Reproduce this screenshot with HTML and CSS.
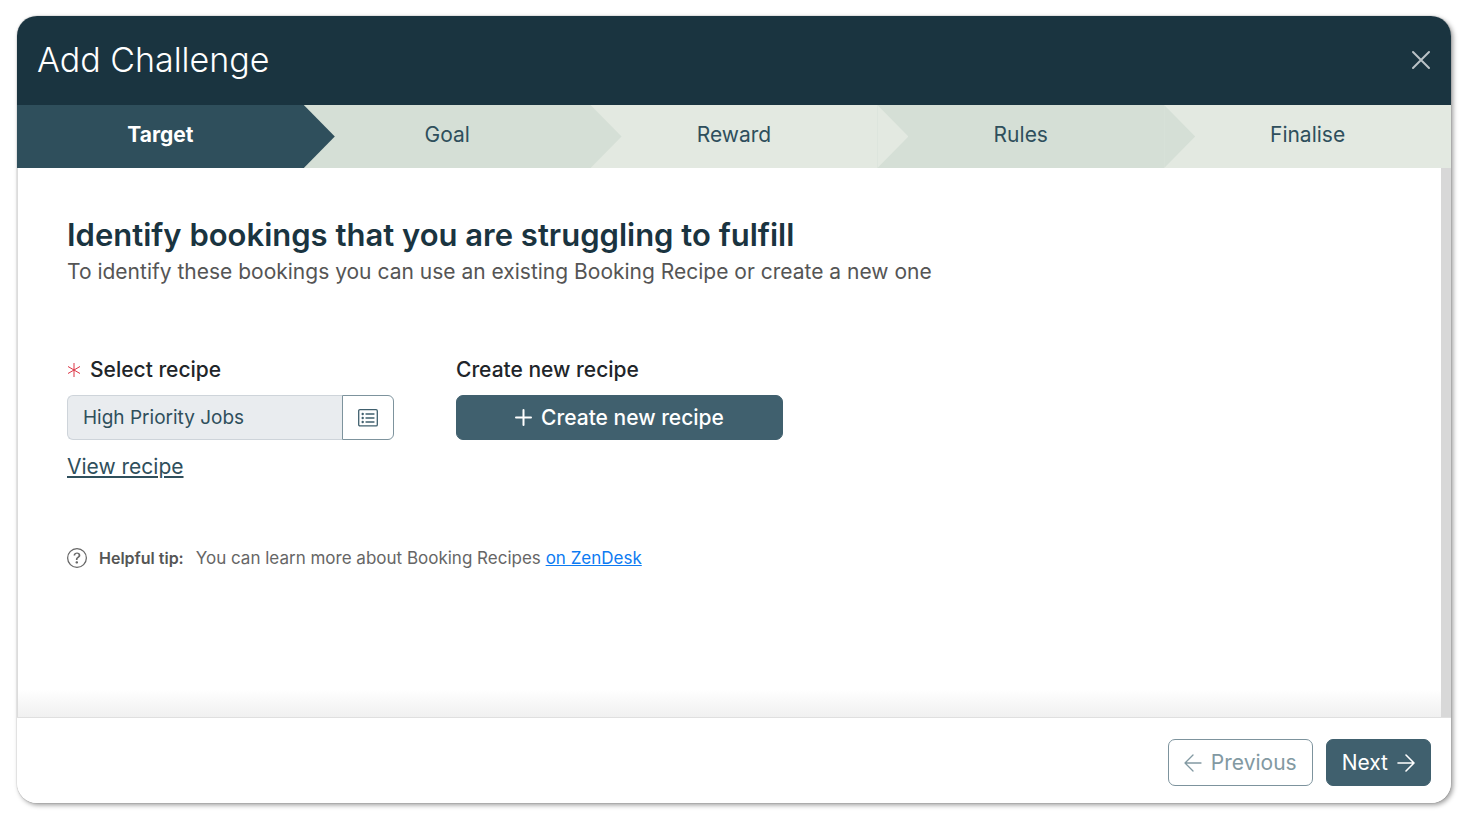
FILE: index.html
```html
<!DOCTYPE html>
<html lang="en">
<head>
<meta charset="utf-8">
<title>Add Challenge</title>
<meta name="viewport" content="width=device-width, initial-scale=1">
<link rel="stylesheet" href="styles.css">
</head>
<body>
<main class="modal" role="dialog" aria-labelledby="modal-title">
  <header class="modal-header">
    <h1 class="modal-title" id="modal-title">Add Challenge</h1>
    <button class="close" type="button" aria-label="Close">
      <svg width="20" height="20" viewBox="0 0 20 20" fill="none" stroke="currentColor" stroke-width="2" stroke-linecap="round"><path d="M2 2l16 16M18 2L2 18"/></svg>
    </button>
  </header>
  <ol class="steps">
    <li class="step step-active" aria-current="step">Target</li>
    <li class="step">Goal</li>
    <li class="step">Reward</li>
    <li class="step">Rules</li>
    <li class="step">Finalise</li>
  </ol>
  <section class="modal-body">
    <h2 class="heading">Identify bookings that you are struggling to fulfill</h2>
    <p class="lead">To identify these bookings you can use an existing Booking Recipe or create a new one</p>
    <div class="fields">
      <div class="field">
        <label class="label" for="recipe">
          <svg class="required" width="14" height="14" viewBox="0 0 14 14" fill="none" stroke="currentColor" stroke-width="1" aria-hidden="true"><path d="M7 0v14M1 3.5l12 7M13 3.5l-12 7"/></svg>
          Select recipe
        </label>
        <div class="input-group">
          <input class="input" id="recipe" type="text" value="High Priority Jobs" readonly>
          <button class="pick" type="button" aria-label="Choose recipe">
            <svg width="20" height="20" viewBox="0 0 20 20" fill="none" stroke="currentColor" stroke-width="1.3" stroke-linecap="round"><rect x=".7" y="1.7" width="18.6" height="16.2" rx="1.2"/><path d="M8 6h8M8 10h8M8 14h8"/><g fill="currentColor" stroke="none"><circle cx="4.7" cy="6" r="1.2"/><circle cx="4.7" cy="10" r="1.2"/><circle cx="4.7" cy="14" r="1.2"/></g></svg>
          </button>
        </div>
        <a class="view" href="#recipe">View recipe</a>
      </div>
      <div class="field">
        <span class="label" id="create-label">Create new recipe</span>
        <button class="btn btn-primary btn-create" type="button">
          <svg width="17" height="17" viewBox="0 0 17 17" fill="none" stroke="currentColor" stroke-width="2" stroke-linecap="round"><path d="M8.500 1v15M1 8.500h15"/></svg>
          Create new recipe
        </button>
      </div>
    </div>
    <p class="tip">
      <svg width="20" height="20" viewBox="0 0 16 16" fill="currentColor" aria-hidden="true"><path d="M8 15A7 7 0 1 1 8 1a7 7 0 0 1 0 14m0 1A8 8 0 1 0 8 0a8 8 0 0 0 0 16"/><path d="M5.255 5.786a.237.237 0 0 0 .241.247h.825c.138 0 .248-.113.266-.25.09-.656.54-1.134 1.342-1.134.686 0 1.314.343 1.314 1.168 0 .635-.374.927-.965 1.371-.673.489-1.206 1.060-1.168 1.987l.003.217a.25.25 0 0 0 .25.246h.811a.25.25 0 0 0 .25-.25v-.105c0-.718.273-.927 1.010-1.486.609-.463 1.244-.977 1.244-2.056 0-1.511-1.276-2.241-2.673-2.241-1.267 0-2.655.590-2.750 2.286m1.557 5.763c0 .533.425.927 1.010.927.609 0 1.028-.394 1.028-.927 0-.552-.420-.940-1.029-.940-.584 0-1.009.388-1.009.940"/></svg>
      <strong class="tip-title">Helpful tip:</strong>
      <span class="tip-text">You can learn more about Booking Recipes <a class="tip-link" href="#zendesk">on ZenDesk</a></span>
    </p>
  </section>
  <footer class="modal-footer">
    <button class="btn btn-outline" type="button">
      <svg width="18" height="18" viewBox="0 0 18 18" fill="none" stroke="currentColor" stroke-width="1.300" stroke-linecap="round" stroke-linejoin="round"><path d="M17 9H1M9 1L1 9l8 8"/></svg>
      Previous
    </button>
    <button class="btn btn-primary" type="button">
      Next
      <svg width="18" height="18" viewBox="0 0 18 18" fill="none" stroke="currentColor" stroke-width="1.600" stroke-linecap="round" stroke-linejoin="round"><path d="M1 9h16M9 1l8 8-8 8"/></svg>
    </button>
  </footer>
</main>
</body>
</html>
```
FILE: styles.css
```css
* { box-sizing: border-box; }

body {
  margin: 0;
  min-height: 100vh;
  padding: 16px 18px 22px 17px;
  display: flex;
  background: #fff;
  color: #212529;
  font-family: Inter, "Liberation Sans", sans-serif;
  font-size: 21px;
  line-height: 28px;
}

button, input { font: inherit; }
h1, h2, p, ol { margin: 0; padding: 0; }
svg { flex: none; }

.modal {
  flex: 1;
  min-width: 0;
  display: flex;
  flex-direction: column;
  overflow: hidden;
  border-radius: 20px;
  background: #fff;
  box-shadow: 0 0 1px rgba(0, 0, 0, .5), 2px 2px 5px rgba(0, 0, 0, .4);
}

.modal-header {
  display: flex;
  align-items: center;
  justify-content: space-between;
  padding: 22px 20px 23px;
  background: #1a3440;
  color: #fff;
}

.modal-title {
  font-size: 34px;
  line-height: 44px;
  font-weight: 300;
}

.close {
  display: flex;
  padding: 0;
  border: 0;
  background: none;
  color: #bac2c6;
}

.steps {
  display: flex;
  list-style: none;
  background: #e3e9e1;
}

.step {
  position: relative;
  flex: 1;
  padding: 16px 0 19px;
  text-align: center;
  background: #e3e9e1;
  color: #2f4f5c;
}

.step:nth-child(even) { background: #d5dfd6; }

.step::after {
  content: "";
  position: absolute;
  z-index: 1;
  top: 0;
  bottom: 0;
  left: 100%;
  width: 31px;
  background: inherit;
  clip-path: polygon(0 0, 100% 50%, 0 100%);
}

.step:last-child::after { display: none; }

.step.step-active {
  background: #2f4f5c;
  color: #fff;
  font-weight: 700;
}

.modal-body {
  flex: 1;
  padding: 46px 50px 50px 49px;
  border-left: 1px solid #dcdcdc;
  border-right: 10px solid #d8d8d8;
  background: linear-gradient(to top, #f0f0f0, #fff 28px);
}

.heading {
  color: #1a3440;
  font-size: 31px;
  line-height: 42px;
  font-weight: 600;
}

.lead {
  color: #555;
  line-height: 32px;
}

.fields {
  display: flex;
  gap: 62px;
  margin-top: 68px;
}

.field {
  display: flex;
  flex-direction: column;
  width: 327px;
}

.label {
  display: flex;
  align-items: center;
  gap: 9px;
  margin-bottom: 11px;
  font-weight: 500;
}

.required { color: #dc3545; }

.input-group { display: flex; height: 45px; }

.input {
  flex: 1;
  min-width: 0;
  padding: 0 15px;
  border: 1px solid #ced4da;
  border-right: 0;
  border-radius: 6px 0 0 6px;
  background: #e9ecef;
  color: #2f4f5c;
  font-size: 19px;
}

.pick {
  display: flex;
  align-items: center;
  justify-content: center;
  width: 52px;
  padding: 0;
  border: 1px solid #7d939d;
  border-radius: 0 6px 6px 0;
  background: #fff;
  color: #40606e;
}

.view {
  align-self: flex-start;
  margin-top: 13px;
  color: #2f4f5c;
}

.btn {
  display: flex;
  align-items: center;
  justify-content: center;
  gap: 9px;
  height: 47px;
  padding: 0 15px;
  border: 1px solid #40606e;
  border-radius: 7px;
}

.btn-primary { background: #40606e; color: #fff; }
.btn-create { height: 45px; font-weight: 500; }

.btn-outline {
  border-color: #7d939d;
  background: #fff;
  color: #8299a2;
}

.tip {
  display: flex;
  align-items: center;
  gap: 12px;
  margin-top: 63px;
  color: #666;
}

.tip-title { color: #555; font-size: 16px; font-weight: 600; }
.tip-text { font-size: 17px; }
.tip-link { color: #0d7bf2; }

.modal-footer {
  display: flex;
  justify-content: flex-end;
  gap: 13px;
  padding: 21px 20px 17px;
  border-top: 1px solid #dfdfdf;
  background: #fff;
}
```
